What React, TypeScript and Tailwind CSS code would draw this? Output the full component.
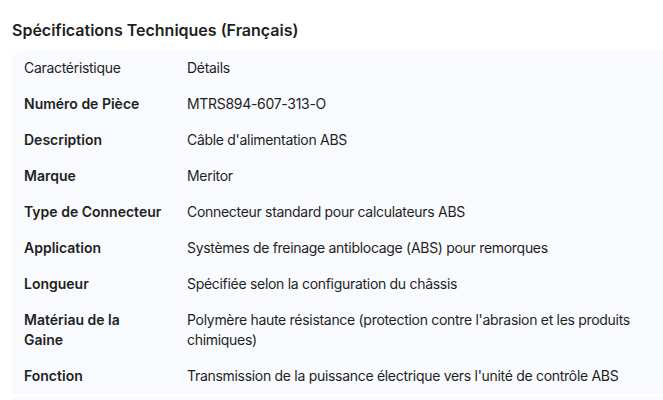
import React from 'react';

const rows: [string, string][] = [
  ['Numéro de Pièce', 'MTRS894-607-313-O'],
  ['Description', "Câble d'alimentation ABS"],
  ['Marque', 'Meritor'],
  ['Type de Connecteur', 'Connecteur standard pour calculateurs ABS'],
  ['Application', 'Systèmes de freinage antiblocage (ABS) pour remorques'],
  ['Longueur', 'Spécifiée selon la configuration du châssis'],
  ['Matériau de la\nGaine', "Polymère haute résistance (protection contre l'abrasion et les produits chimiques)"],
  ['Fonction', "Transmission de la puissance électrique vers l'unité de contrôle ABS"],
];

export default function App() {
  return (
    <div className="w-[663px] h-[400px] overflow-hidden bg-white text-[#1f1f1f] font-['Inter',sans-serif]">
      <h2 className="pl-3 pt-[19px] h-[50px] text-[16px] leading-[22px] font-semibold">
        Spécifications Techniques (Français)
      </h2>
      <div className="ml-3 bg-[#f8fafd] rounded-tl-xl rounded-bl-sm">
        <table className="w-full border-collapse text-[14px] leading-5 table-fixed">
          <thead>
            <tr>
              <th className="w-[163px] px-3 py-2 text-left font-normal tracking-[-0.3px]">Caractéristique</th>
              <th className="px-3 pr-5 py-2 text-left font-normal tracking-[-0.3px]">Détails</th>
            </tr>
          </thead>
          <tbody>
            {rows.map(([k, v]) => (
              <tr key={k}>
                <td className="px-3 py-2 align-top font-semibold whitespace-pre-line">{k}</td>
                <td className="px-3 pr-5 py-2 align-top tracking-[-0.3px]">{v}</td>
              </tr>
            ))}
          </tbody>
        </table>
      </div>
      <div className="ml-3 mt-[3px] h-[10px] bg-[#f8fafd]" />
    </div>
  );
}
